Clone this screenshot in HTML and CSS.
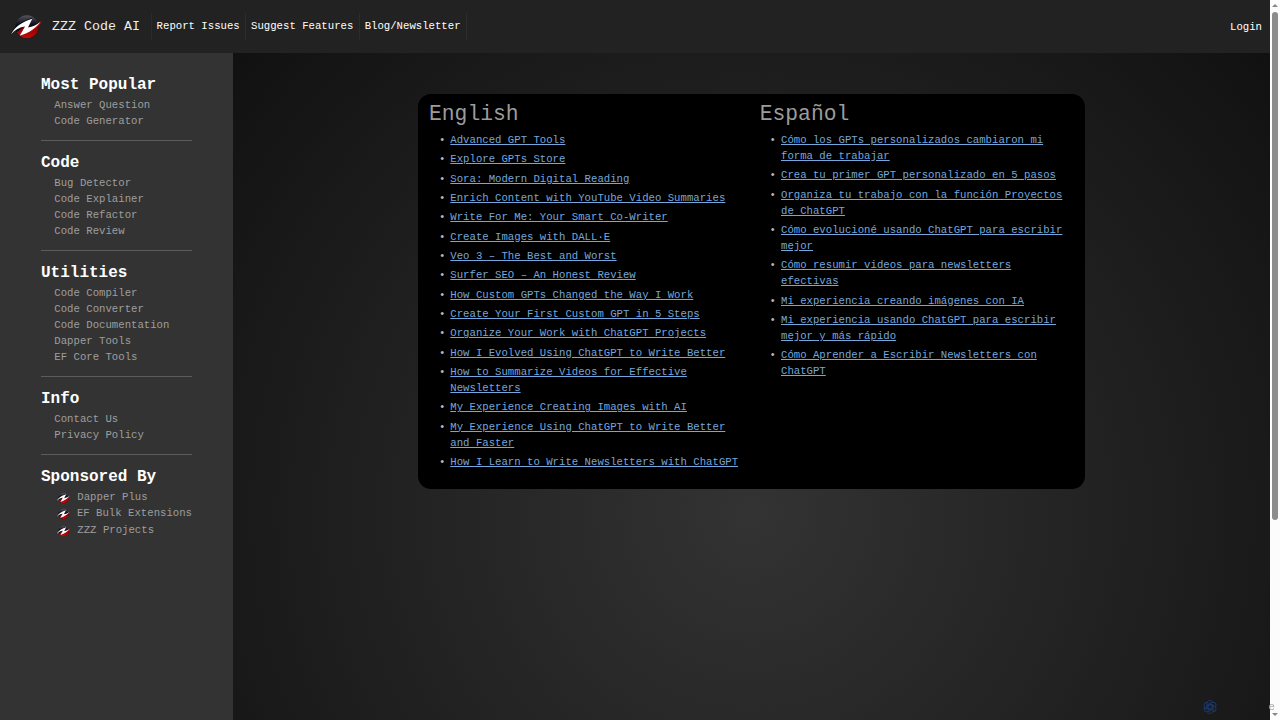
FILE: index.html
```html
<!DOCTYPE html>
<html lang="en">
<head>
<meta charset="utf-8">
<title>ZZZ Code AI</title>
<link rel="stylesheet" href="styles.css">
</head>
<body>
<svg class="defs" width="0" height="0">
  <defs>
    <linearGradient id="g-dark" x1="0" y1="0" x2="0" y2="1"><stop offset="0" stop-color="#55555c"/><stop offset=".4" stop-color="#0c0c1c"/></linearGradient>
    <linearGradient id="g-red" x1="0" y1="0" x2="0" y2="1"><stop offset="0" stop-color="#8d0000"/><stop offset="1" stop-color="#c00a0a"/></linearGradient>
    <symbol id="logo" viewBox="0 0 34 26">
      <circle cx="17.5" cy="13" r="12" fill="url(#g-dark)"/>
      <path d="M29.500 12.500A12 12 0 0 1 7 18.500L14 13Z" fill="url(#g-red)"/>
      <path d="M0 22C3 13 11 7.500 23 3.500L20 11C13 9 5 13 0 22Z" fill="#0b0b14"/>
      <path d="M19 14C25 13.500 29 11 33 6C31 13 24 18 15 20Z" fill="#b00808"/>
      <path d="M1 20.500C5 13 12 8 23 4.500L18.500 13.500C23.500 13 28 10.500 31.500 7.500C27 13.500 20 19 10 22L15.500 12.500C10 13 5 16 1 20.500Z" fill="#fff"/>
    </symbol>
  </defs>
</svg>

<header class="navbar">
  <a class="brand" href="#"><svg class="brand-logo"><use href="#logo"/></svg>ZZZ Code AI</a>
  <nav class="nav">
    <a href="#">Report Issues</a>
    <a href="#">Suggest Features</a>
    <a href="#">Blog/Newsletter</a>
  </nav>
  <a class="login" href="#">Login</a>
</header>

<div class="page">
  <aside class="sidebar">
    <section>
      <h5>Most Popular</h5>
      <ul>
        <li>Answer Question</li>
        <li>Code Generator</li>
      </ul>
    </section>
    <section>
      <h5>Code</h5>
      <ul>
        <li>Bug Detector</li>
        <li>Code Explainer</li>
        <li>Code Refactor</li>
        <li>Code Review</li>
      </ul>
    </section>
    <section>
      <h5>Utilities</h5>
      <ul>
        <li>Code Compiler</li>
        <li>Code Converter</li>
        <li>Code Documentation</li>
        <li>Dapper Tools</li>
        <li>EF Core Tools</li>
      </ul>
    </section>
    <section>
      <h5>Info</h5>
      <ul>
        <li>Contact Us</li>
        <li>Privacy Policy</li>
      </ul>
    </section>
    <section>
      <h5>Sponsored By</h5>
      <ul class="sponsors">
        <li><svg><use href="#logo"/></svg>Dapper Plus</li>
        <li><svg><use href="#logo"/></svg>EF Bulk Extensions</li>
        <li><svg><use href="#logo"/></svg>ZZZ Projects</li>
      </ul>
    </section>
  </aside>

  <main class="main">
    <div class="card">
      <div class="col">
        <h2>English</h2>
        <ul>
          <li><a href="#">Advanced GPT Tools</a></li>
          <li><a href="#">Explore GPTs Store</a></li>
          <li><a href="#">Sora: Modern Digital Reading</a></li>
          <li><a href="#">Enrich Content with YouTube Video Summaries</a></li>
          <li><a href="#">Write For Me: Your Smart Co-Writer</a></li>
          <li><a href="#">Create Images with DALL·E</a></li>
          <li><a href="#">Veo 3 – The Best and Worst</a></li>
          <li><a href="#">Surfer SEO – An Honest Review</a></li>
          <li><a href="#">How Custom GPTs Changed the Way I Work</a></li>
          <li><a href="#">Create Your First Custom GPT in 5 Steps</a></li>
          <li><a href="#">Organize Your Work with ChatGPT Projects</a></li>
          <li><a href="#">How I Evolved Using ChatGPT to Write Better</a></li>
          <li><a href="#">How to Summarize Videos for Effective Newsletters</a></li>
          <li><a href="#">My Experience Creating Images with AI</a></li>
          <li><a href="#">My Experience Using ChatGPT to Write Better and Faster</a></li>
          <li><a href="#">How I Learn to Write Newsletters with ChatGPT</a></li>
        </ul>
      </div>
      <div class="col">
        <h2>Español</h2>
        <ul>
          <li><a href="#">Cómo los GPTs personalizados cambiaron mi forma de trabajar</a></li>
          <li><a href="#">Crea tu primer GPT personalizado en 5 pasos</a></li>
          <li><a href="#">Organiza tu trabajo con la función Proyectos de ChatGPT</a></li>
          <li><a href="#">Cómo evolucioné usando ChatGPT para escribir mejor</a></li>
          <li><a href="#">Cómo resumir videos para newsletters efectivas</a></li>
          <li><a href="#">Mi experiencia creando imágenes con IA</a></li>
          <li><a href="#">Mi experiencia usando ChatGPT para escribir mejor y más rápido</a></li>
          <li><a href="#">Cómo Aprender a Escribir Newsletters con ChatGPT</a></li>
        </ul>
      </div>
    </div>
  </main>
</div>

<div class="scrollbar"><i class="up"></i><i class="thumb"></i><i class="down"></i></div>

<div class="widget">
  <svg viewBox="0 0 24 24" fill="none" stroke="#1b3768" stroke-width="1.5">
    <path id="petal" d="M7.500 6.500a4.500 4.500 0 0 1 8.300-2.200L9.200 8.200v7.400l3 1.700"/>
    <use href="#petal" transform="rotate(60 12 12)"/>
    <use href="#petal" transform="rotate(120 12 12)"/>
    <use href="#petal" transform="rotate(180 12 12)"/>
    <use href="#petal" transform="rotate(240 12 12)"/>
    <use href="#petal" transform="rotate(300 12 12)"/>
  </svg>
  <span>e</span>
</div>
</body>
</html>
```
FILE: styles.css
```css
* {box-sizing: border-box;}
body {margin: 0; height: 720px; overflow: hidden; background: #222; color: #aaa; font: 10.667px/16px "Courier New", "Liberation Mono", monospace;}
a {color: inherit; text-decoration: none;}
ul {margin: 0; padding: 0;}
.defs {position: absolute;}

/* top bar */
.navbar {display: flex; align-items: center; height: 53px; padding: 0 8px 0 10px; margin-right: 10px; background: #222; color: #fff;}
.brand {display: flex; align-items: center; width: 141px; font-size: 13.333px; color: #eee;}
.brand-logo {width: 33px; height: 26px; margin-right: 9px; flex: none;}
.nav {display: flex; border-left: 1px solid #2c2c2c;}
.nav a {height: 27px; line-height: 27px; padding: 0 5.7px 0 4.6px; border-right: 1px solid #2c2c2c;}
.login {margin-left: auto;}

.page {display: flex; height: 667px; margin-right: 10px;}

/* sidebar */
.sidebar {width: 233px; padding: 20px 41px 0; background: #333; flex: none;}
.sidebar section {padding-bottom: 11px; margin-bottom: 10px; border-bottom: 1px solid #5c5c5c;}
.sidebar section:last-child {border: 0;}
.sidebar h5 {margin: 0; font-size: 16px; line-height: 24px; color: #fff;}
.sidebar ul {list-style: none; padding-left: 13.3px; white-space: nowrap; color: #9e9e9e;}
.sidebar .sponsors li {display: flex; align-items: center; height: 16.3px;}
.sponsors svg {width: 15px; height: 12px; margin: 2px 6px 0 2px;}

/* content */
.main {flex: 1; padding-top: 40.5px; background: radial-gradient(circle, #333, #111) 0 0 / 100% 921px no-repeat;}
.card {display: flex; width: 667px; height: 395px; margin: 0 auto; padding: 8px 0 0 11px; border-radius: 13px; background: #000;}
.col {width: 330.7px; padding-right: 20px; flex: none;}
.col h2 {margin: 0 0 5px; font-size: 21.333px; line-height: 25.5px; font-weight: 400; color: #9c9c9c;}
.col ul {padding-left: 21.3px; list-style: none;}
.col li {margin-bottom: 3.33px;}
.col li:before {content: "•"; float: left; margin-left: -11.4px; color: #bbb;}
.col li a {color: #75a7dc; text-decoration: underline;}

/* window scrollbar */
.scrollbar {position: fixed; top: 0; right: 0; width: 10px; height: 720px; background: #fcfcfc;}
.scrollbar i {position: absolute; left: 2px;}
.scrollbar .up {top: 4px; border: 3px solid transparent; border-top: 0; border-bottom: 3px solid #858585;}
.scrollbar .down {bottom: 4px; border: 3px solid transparent; border-bottom: 0; border-top: 3px solid #858585;}
.scrollbar .thumb {top: 12px; width: 6px; height: 508px; border-radius: 3px; background: #8c8c8c;}

.widget {position: fixed; right: 5px; bottom: 5px; width: 73px; height: 16px; display: flex; justify-content: space-between; color: #aaa;}
.widget svg {width: 16px; height: 16px;}
```
